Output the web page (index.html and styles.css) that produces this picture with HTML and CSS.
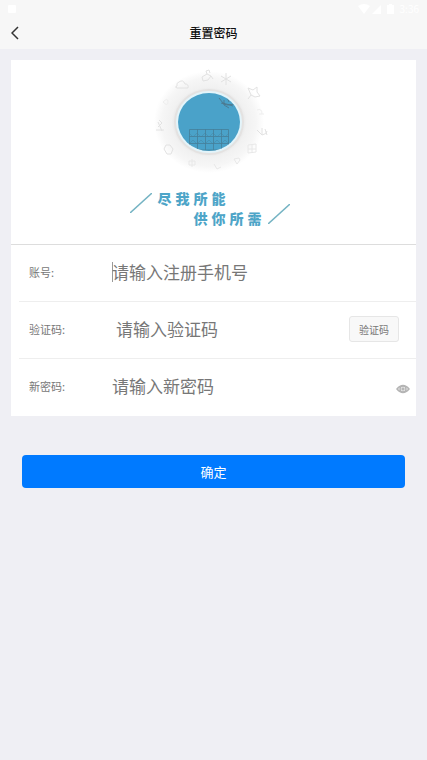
FILE: index.html
```html
<!DOCTYPE html>
<html lang="zh-CN">
<head>
<meta charset="utf-8">
<meta name="viewport" content="width=device-width, initial-scale=1">
<title>重置密码</title>
<link rel="stylesheet" href="styles.css">
</head>
<body>
<header class="top">
  <div class="status">
    <svg class="status-note" viewBox="0 0 8 8" aria-hidden="true"><rect width="8" height="8" rx="1"/></svg>
    <svg class="status-icons" viewBox="0 0 38 12" aria-hidden="true">
      <path d="M0 3Q6-1 12 3L6 11Z"/><path d="M14 11L23 2V11Z"/><path d="M29 2h2V1h3v1h2v9h-7Z"/>
    </svg>
    <span>3:36</span>
  </div>
  <div class="nav">
    <a class="back" href="#" aria-label="返回">
      <svg viewBox="0 0 8 14" aria-hidden="true"><path d="M7 1L1 7l6 6"/></svg>
    </a>
    <h1>重置密码</h1>
  </div>
</header>
<main>
  <form class="card">
    <div class="banner">
      <svg class="emblem" viewBox="0 0 130 115" aria-hidden="true">
        <defs>
          <radialGradient id="halo">
            <stop offset="0.6" stop-color="#e6e6e6"/>
            <stop offset="0.68" stop-color="#f1f1f1"/>
            <stop offset="0.86" stop-color="#f6f6f6"/>
            <stop offset="1" stop-color="#fff"/>
          </radialGradient>
          <clipPath id="disc"><ellipse cx="64" cy="60" rx="31" ry="29"/></clipPath>
        </defs>
        <ellipse cx="64" cy="60" rx="55" ry="51" fill="url(#halo)"/>
        <ellipse cx="64" cy="60" rx="35" ry="33" fill="#e4e2e1"/>
        <ellipse cx="64" cy="60" rx="33" ry="31" fill="#e3f4fa"/>
        <ellipse cx="64" cy="60" rx="31" ry="29" fill="#4aa2c9"/>
        <g clip-path="url(#disc)" fill="none" stroke="#45809a">
          <path d="M44.500 67.500H83.500V88H44.500ZM44 74.500H84M44 81.500H84M52.500 67V88M60.500 67V88M68.500 67V88M76.500 67V88" stroke-opacity=".8"/>
          <path d="M44 71l4 4 4-4 4 4 4-4 4 4 4-4 4 4 4-4 4 4 4-4M44 82l4-4 4 4 4-4 4 4 4-4 4 4 4-4 4 4 4-4 4 4" stroke-opacity=".4"/>
          <path d="M74 36l4 5 10 3M76 41l6 2 8-1M79 38v5l5 3M82 35l2 5" stroke="#4d7487" stroke-opacity=".8"/>
        </g>
        <g fill="none" stroke="#e2e2e2">
          <path d="M32 26h11q1-4-3-4-2-5-6-2-3 1-2 4-3 1 0 2Z"/>
          <path d="M57 15l5-3 4 2-3 4-5 1ZM62 12l-1-3 3-1 1 3M66 14l2 3"/>
          <path d="M81 11v12M76 14l10 6M76 20l10-6"/>
          <path d="M103 26l5 2 4-3v5l3 4-5 1-4-2ZM106 33l-3 4"/>
          <path d="M112 48q5-2 5 4M114 52h5" stroke="#eee"/>
          <path d="M112 68l5 5q5-1 5-4M117 66v7M120 67l2 6"/>
          <path d="M103 83l8-1v8l-8 1ZM103 87h8M107 83v8" stroke="#e8e8e8"/>
          <path d="M89 97l3 5 3-4-1-2ZM69 102l3 5 4-2" stroke="#e8e8e8"/>
          <path d="M44 99h6v4h-6ZM47 97v8" stroke="#e8e8e8"/>
          <path d="M21 83l-2 4 3 5h4l2-5-3-4Z"/>
          <path d="M14 58l3 3-4 4M13 60l4 9M11 68h8"/>
          <path d="M18 40q5-5 5 0t-5 0Z" stroke="#eee"/>
        </g>
      </svg>
      <div class="slogan">
        <svg viewBox="0 0 22 20" aria-hidden="true"><path d="M0 20L22 0"/></svg>
        <p><span>尽我所能</span><span>供你所需</span></p>
        <svg class="low" viewBox="0 0 22 20" aria-hidden="true"><path d="M0 20L22 0"/></svg>
      </div>
    </div>
    <div class="row">
      <label for="account">账号:</label>
      <span class="caret"></span>
      <input id="account" type="tel" placeholder="请输入注册手机号">
    </div>
    <div class="row">
      <label for="code">验证码:</label>
      <input id="code" class="code" type="text" placeholder="请输入验证码">
      <button class="send" type="button">验证码</button>
    </div>
    <div class="row">
      <label for="password">新密码:</label>
      <input id="password" type="password" placeholder="请输入新密码">
      <button class="eye" type="button" aria-label="显示密码">
        <svg viewBox="0 0 14 10" aria-hidden="true"><path d="M1 5Q7-2 13 5Q7 12 1 5Z"/><circle cx="7" cy="5" r="3"/><circle cx="7" cy="5" r="1"/></svg>
      </button>
    </div>
  </form>
  <button class="submit" type="button">确定</button>
</main>
</body>
</html>
```
FILE: styles.css
```css
* { box-sizing: border-box; }
body {
  margin: 0;
  min-height: 100vh;
  background: #efeff4;
  color: #777;
  font-family: "Noto Sans CJK SC", sans-serif;
}
button, input { font: inherit; color: inherit; border: 0; margin: 0; padding: 0; background: none; }
svg { display: block; }

.top { background: #f7f7f7; }
.status {
  display: flex;
  align-items: center;
  gap: 4px;
  height: 17px;
  padding: 0 8px;
  color: #fff;
  fill: #fff;
  font-size: 10px;
  line-height: 16px;
}
.status-note { width: 8px; height: 8px; margin-right: auto; }
.status-icons { width: 38px; height: 12px; }
.nav { display: grid; grid-template-columns: 40px 1fr 40px; align-items: center; height: 32px; }
.back { padding: 8px 11px; }
.back svg { width: 8px; height: 14px; fill: none; stroke: #333; stroke-width: 1.5; }
h1 { margin: 0; text-align: center; font-size: 12px; line-height: 20px; font-weight: 500; color: #111; }

main { padding: 11px; }
.card { background: #fff; }
.banner {
  display: flex;
  flex-direction: column;
  align-items: center;
  gap: 11px;
  height: 185px;
  padding: 2px 8px 0 0;
  border-bottom: 1px solid #ddd;
}
.emblem { width: 130px; height: 115px; }
.slogan { display: flex; gap: 6px; color: #4ea5c8; }
.slogan svg { width: 22px; height: 20px; margin-top: 5px; fill: none; stroke: #74b3c3; stroke-width: 1.5; }
.slogan .low { margin-top: 16px; }
.slogan p { margin: 0; width: 104px; font-size: 14px; line-height: 20px; font-weight: 900; letter-spacing: 4px; }
.slogan span { display: block; white-space: nowrap; }
.slogan span + span { padding-left: 36px; }

.row { display: flex; align-items: center; height: 57px; padding: 0 17px 3px 18px; position: relative; }
.row:not(:last-child)::after { content: ""; position: absolute; bottom: 0; left: 8px; right: 0; border-top: 1px solid #eee; }
.row label { flex: none; width: 83px; font-size: 11px; line-height: 20px; }
.row input { flex: 1; min-width: 0; font-size: 17px; line-height: 26px; outline: 0; }
.row input::placeholder { color: #777; opacity: 1; }
.row .code { padding-left: 4px; }
.caret { width: 1px; height: 20px; margin-right: -1px; background: #999; }
.send {
  width: 50px;
  height: 26px;
  border: 1px solid #e6e6e6;
  border-radius: 3px;
  background: #f8f8f8;
  font-size: 10px;
}
.eye { width: 14px; height: 10px; margin: 6px -11px 0 0; }
.eye svg { width: 14px; height: 10px; fill: none; stroke: #b4b4b4; stroke-width: 1.5; }

.submit {
  display: block;
  width: calc(100% - 22px);
  height: 33px;
  margin: 39px 11px 0;
  border-radius: 4px;
  background: #007aff;
  color: #fff;
  font-size: 13px;
}
```
